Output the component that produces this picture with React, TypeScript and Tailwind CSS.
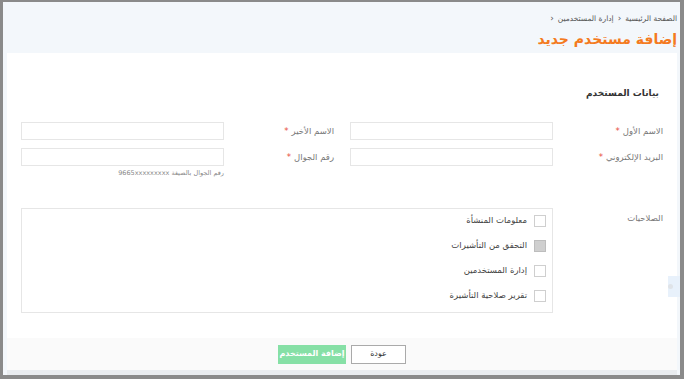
import React from "react";

const font = { fontFamily: '"DejaVu Sans", "Noto Sans", sans-serif' };

function Field({ label, hint }: { label: string; hint?: string }) {
  return (
    <div className="flex items-start">
      <label className="w-[110px] h-[18px] flex items-center text-[8.5px] leading-none text-[#777]">
        {label}
        <span className="text-[#e74c3c] mr-[3px]">*</span>
      </label>
      <div className="w-[203px]">
        <input className="block w-[203px] h-[18px] border border-[#e6e6e6] bg-white outline-none" />
        {hint && <div className="text-[6.5px] leading-none text-[#888] mt-[4px]">{hint}</div>}
      </div>
    </div>
  );
}

const perms = [
  { name: "معلومات المنشأة", disabled: false },
  { name: "التحقق من التأشيرات", disabled: true },
  { name: "إدارة المستخدمين", disabled: false },
  { name: "تقرير صلاحية التأشيرة", disabled: false },
];

export default function App() {
  return (
    <div
      dir="rtl"
      style={font}
      className="relative w-[684px] h-[379px] overflow-hidden bg-[#f3f7fb] border-t-2 border-l-[3px] border-r-[4px] border-b-[4px] border-[#8a8a8a] flex flex-col"
    >
      {/* header */}
      <div className="h-[51px] pr-[3px] pt-[10px]">
        <div className="flex items-center gap-[4px] text-[7.5px] text-[#555]">
          <span>الصفحة الرئيسية</span>
          <span className="text-[9px]">‹</span>
          <span>إدارة المستخدمين</span>
          <span className="text-[9px]">‹</span>
        </div>
        <h1 className="mt-[3px] text-[14px] font-bold text-[#f47a20] leading-[20px]">إضافة مستخدم جديد</h1>
      </div>

      {/* card */}
      <div className="mr-[3px] ml-[4px] flex-1 flex flex-col bg-white">
        <div className="flex-1 pr-[14px] pl-[12px] pt-[34px]">
          <h2 className="text-[9px] leading-[12px] font-bold text-[#333] pr-[4px]">بيانات المستخدم</h2>
          <div className="mt-[23px] flex flex-col gap-[8px]">
            <div className="flex gap-[16px]">
              <Field label="الاسم الأول" />
              <Field label="الاسم الأخير" />
            </div>
            <div className="flex gap-[16px]">
              <Field label="البريد الإلكتروني" />
              <Field label="رقم الجوال" hint="رقم الجوال بالصيغة 9665xxxxxxxxx" />
            </div>
          </div>
          <div className="mt-[31px] flex items-start">
            <div className="w-[110px] pt-[4px] text-[8.5px] text-[#777]">الصلاحيات</div>
            <div className="w-[532px] h-[105px] border border-[#e6e6e6] pr-[6px] pt-[6px] flex flex-col gap-[13px]">
              {perms.map((p) => (
                <label key={p.name} className="h-[12px] flex items-center gap-[7px] text-[8.5px] leading-none text-[#444]">
                  <span
                    className={
                      p.disabled
                        ? "w-[12px] h-[12px] bg-[#cfcfcf] border border-[#bdbdbd]"
                        : "w-[12px] h-[12px] bg-white border border-[#cfcfcf]"
                    }
                  />
                  {p.name}
                </label>
              ))}
            </div>
          </div>
        </div>
        <div className="h-[32px] bg-[#fafafa] flex items-center pr-[271px] gap-[5px]">
          <button className="w-[55px] h-[19px] border border-[#aaa] bg-white text-[8px] text-[#333]">عودة</button>
          <button className="w-[68px] h-[19px] bg-[#86e0a6] text-[8px] font-bold text-white">إضافة المستخدم</button>
        </div>
        <div className="h-[5px] bg-[#e9ecef]" />
      </div>

      <div className="absolute right-0 top-[274px] w-[12px] h-[21px] bg-[#e8f1fb] flex items-center justify-end">
        <span className="w-[5px] h-[5px] rounded-full bg-[#dfe3e8]" />
      </div>
    </div>
  );
}
